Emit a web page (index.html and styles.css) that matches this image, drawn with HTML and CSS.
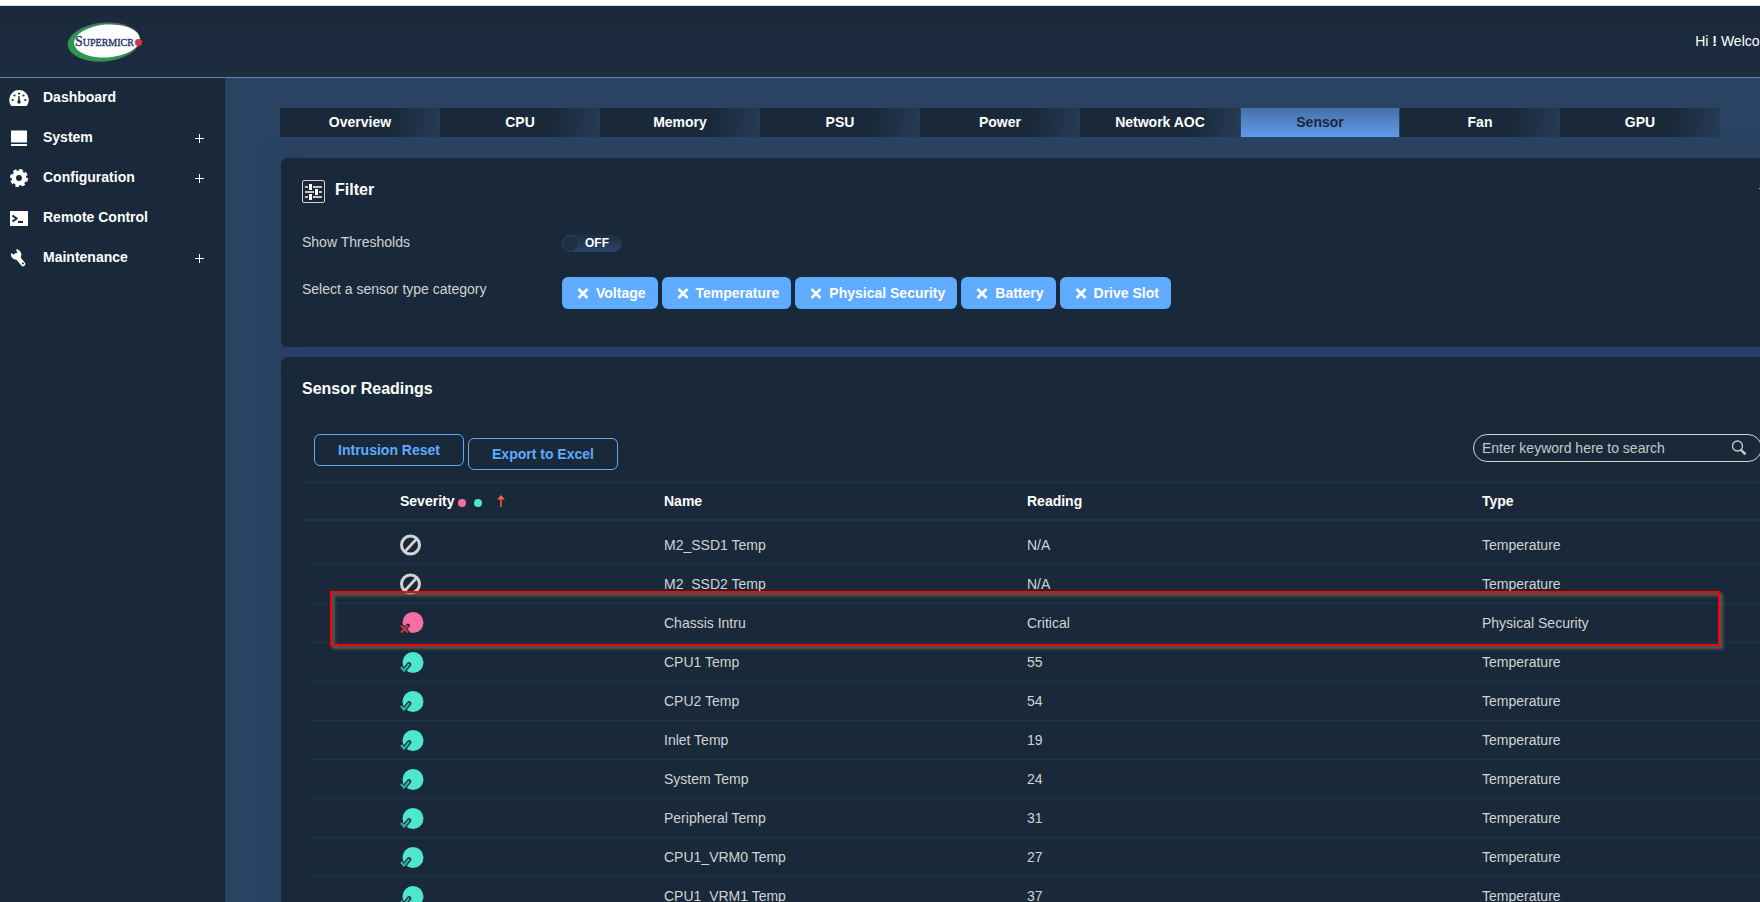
FILE: index.html
```html
<!DOCTYPE html>
<html lang="en">
<head>
  <meta charset="utf-8">
  <title>Supermicro BMC - Sensor</title>
  <link rel="stylesheet" href="styles.css">
</head>

<body>

<svg width="0" height="0" class="sprite" aria-hidden="true">
  <symbol id="na" viewBox="0 0 24 22">
    <circle cx="10.5" cy="11" r="9" fill="none" stroke="#d3d3d3" stroke-width="3"/>
    <path d="M5 17.5L16.5 5" stroke="#d3d3d3" stroke-width="2.6"/>
  </symbol>
  <symbol id="critical" viewBox="0 0 24 22">
    <circle cx="13" cy="10.500" r="10.500" fill="#f56fa3"/>
    <path d="M1.500 13.500L8 20.500M8 13.500L1.500 20.500" stroke="#192939" stroke-width="4" stroke-linecap="round"/>
    <path d="M1 13.500L8 20.500M8 13.500L1 20.500" stroke="#c4393a" stroke-width="2.200"/>
  </symbol>
  <symbol id="ok" viewBox="0 0 24 22">
    <circle cx="13" cy="11.500" r="10.500" fill="#4ce7ce"/>
    <path d="M1 16.500L4 19.500L9 13.500" fill="none" stroke="#192939" stroke-width="4.500" stroke-linecap="round"/>
    <path d="M1 16L4 19.500L9.300 13" fill="none" stroke="#36ac9b" stroke-width="2.200"/>
  </symbol>
  <symbol id="cross" viewBox="0 0 12 12">
    <path d="M1.500 2L10.500 11M10.500 2L1.500 11" stroke="#fff" stroke-width="2.600"/>
  </symbol>
</svg>

<div class="page">

  <header class="topbar">
    <a href="#" class="logo" aria-label="Supermicro">
      <svg width="80" height="42" viewBox="0 0 80 42">
        <ellipse cx="38" cy="21" rx="36.500" ry="19.500" transform="rotate(-5 38 21)" fill="#8b9aa2" opacity=".5"/>
        <ellipse cx="37" cy="21.500" rx="35" ry="18.500" transform="rotate(-5 37 21.500)" fill="#2a9a4a"/>
        <ellipse cx="41" cy="20" rx="33" ry="16.500" transform="rotate(-4 41 20)" fill="#fff"/>
        <text x="9" y="25" class="logo-text"><tspan class="logo-cap">S</tspan>UPERMICR</text>
        <circle cx="72.500" cy="21.500" r="3.600" fill="#d9343a"/>
      </svg>
    </a>
    <span class="welcome">Hi <b>!</b> Welcome</span>
  </header>

  <div class="body">

    <nav class="sidebar">
      <a href="#">
        <svg width="20" height="20" viewBox="0 0 20 20"><path d="M2 17.500A9.800 9.800 0 1 1 18 17.500Q17.700 18 17 18H3Q2.300 18 2 17.500z" fill="#fff"/><g fill="#192939"><circle cx="3.700" cy="12" r="1.100"/><circle cx="5.500" cy="7.500" r="1.100"/><circle cx="10" cy="5.500" r="1.100"/><circle cx="14.500" cy="7.500" r="1.100"/><circle cx="16.300" cy="12" r="1.100"/><path d="M9.400 8h1.200l.3 4.500a1.700 1.700 0 1 1-1.800 0z"/></g></svg>
        <span>Dashboard</span>
      </a>
      <a href="#">
        <svg width="20" height="20" viewBox="0 0 20 20"><path d="M2.500 2.500h15q.5 0 .5.500v11.500H2V3q0-.5.500-.5zM2 16h16v2H2z" fill="#fff"/></svg>
        <span>System</span><i class="plus"></i>
      </a>
      <a href="#">
        <svg width="20" height="20" viewBox="0 0 20 20"><circle cx="10" cy="10" r="5.200" fill="none" stroke="#fff" stroke-width="4.500"/><circle cx="10" cy="10" r="7.600" fill="none" stroke="#fff" stroke-width="3" stroke-dasharray="3.400 2.569"/></svg>
        <span>Configuration</span><i class="plus"></i>
      </a>
      <a href="#">
        <svg width="20" height="20" viewBox="0 0 20 20"><path d="M1 3h18v15H1z" fill="#fff"/><path d="M3.500 7.500L7.500 10.500L3.500 13.500M9 14h5" fill="none" stroke="#192939" stroke-width="2"/></svg>
        <span>Remote Control</span>
      </a>
      <a href="#">
        <svg width="20" height="20" viewBox="0 0 20 20"><path d="M7 7.500L14 16" stroke="#fff" stroke-width="4.600" stroke-linecap="round"/><path d="M7 1.300A5.200 5.200 0 1 1 2.200 5L5.500 7.300L8.200 4.800z" fill="#fff"/><circle cx="14" cy="15.500" r="1" fill="#192939"/></svg>
        <span>Maintenance</span><i class="plus"></i>
      </a>
    </nav>

    <main class="content">

      <nav class="tabs">
        <a href="#">Overview</a>
        <a href="#">CPU</a>
        <a href="#">Memory</a>
        <a href="#">PSU</a>
        <a href="#">Power</a>
        <a href="#">Network AOC</a>
        <a href="#" class="active">Sensor</a>
        <a href="#">Fan</a>
        <a href="#">GPU</a>
      </nav>

      <section class="panel filter">
        <h2>
          <svg width="23" height="23" viewBox="0 0 23 23"><rect x=".5" y=".5" width="22" height="22" rx="1.500" fill="none" stroke="#d3d3d3"/><path d="M3 7h3M11 7h9M3 12h9M17 12h3M3 17h3M11 17h9" stroke="#c8c8c8" stroke-width="2"/><path d="M8.500 4v6M14.500 9v6M8.500 14v6" stroke="#fff" stroke-width="3"/></svg>
          <span>Filter</span>
          <svg class="chevron" width="10" height="6" viewBox="0 0 10 6"><path d="M0 0h10L5 6z" fill="#fff"/></svg>
        </h2>
        <div class="field">
          <label for="thresholds">Show Thresholds</label>
          <label class="switch"><input type="checkbox" id="thresholds"><span>OFF</span></label>
        </div>
        <div class="field category">
          <span>Select a sensor type category</span>
          <div class="chips">
            <button type="button"><svg width="12" height="12"><use href="#cross"/></svg>Voltage</button>
            <button type="button"><svg width="12" height="12"><use href="#cross"/></svg>Temperature</button>
            <button type="button"><svg width="12" height="12"><use href="#cross"/></svg>Physical Security</button>
            <button type="button"><svg width="12" height="12"><use href="#cross"/></svg>Battery</button>
            <button type="button"><svg width="12" height="12"><use href="#cross"/></svg>Drive Slot</button>
          </div>
        </div>
      </section>

      <section class="panel readings">
        <h2>Sensor Readings</h2>

        <div class="toolbar">
          <button type="button" class="outline">Intrusion Reset</button>
          <button type="button" class="outline export">Export to Excel</button>
          <div class="search">
            <input type="text" aria-label="Search sensors" placeholder="Enter keyword here to search">
            <button type="button" aria-label="Search"><svg width="16" height="16" viewBox="0 0 16 16"><circle cx="6.500" cy="6" r="5" fill="none" stroke="#c8c8c8" stroke-width="1.300"/><path d="M10 9.800L14.500 14.300" stroke="#c8c8c8" stroke-width="2.400"/></svg></button>
          </div>
        </div>

        <div class="table-wrap">
          <table>
            <colgroup>
              <col class="c-severity">
              <col class="c-name">
              <col class="c-reading">
              <col>
            </colgroup>
            <thead>
              <tr>
                <th>
                  <div class="sev-head">Severity
                    <i class="dot pink"></i><i class="dot teal"></i>
                    <svg width="8" height="12" viewBox="0 0 8 12"><path d="M4 12V2" stroke="#f4604e" stroke-width="1.500"/><path d="M0 4.500L4 0L8 4.500z" fill="#f4604e"/></svg>
                  </div>
                </th>
                <th>Name</th>
                <th>Reading</th>
                <th>Type</th>
              </tr>
            </thead>
            <tbody>
              <tr><td><svg class="sev"><use href="#na"/></svg></td><td>M2_SSD1 Temp</td><td>N/A</td><td>Temperature</td></tr>
              <tr><td><svg class="sev"><use href="#na"/></svg></td><td>M2_SSD2 Temp</td><td>N/A</td><td>Temperature</td></tr>
              <tr><td><svg class="sev"><use href="#critical"/></svg></td><td>Chassis Intru</td><td>Critical</td><td>Physical Security</td></tr>
              <tr><td><svg class="sev"><use href="#ok"/></svg></td><td>CPU1 Temp</td><td>55</td><td>Temperature</td></tr>
              <tr><td><svg class="sev"><use href="#ok"/></svg></td><td>CPU2 Temp</td><td>54</td><td>Temperature</td></tr>
              <tr><td><svg class="sev"><use href="#ok"/></svg></td><td>Inlet Temp</td><td>19</td><td>Temperature</td></tr>
              <tr><td><svg class="sev"><use href="#ok"/></svg></td><td>System Temp</td><td>24</td><td>Temperature</td></tr>
              <tr><td><svg class="sev"><use href="#ok"/></svg></td><td>Peripheral Temp</td><td>31</td><td>Temperature</td></tr>
              <tr><td><svg class="sev"><use href="#ok"/></svg></td><td>CPU1_VRM0 Temp</td><td>27</td><td>Temperature</td></tr>
              <tr><td><svg class="sev"><use href="#ok"/></svg></td><td>CPU1_VRM1 Temp</td><td>37</td><td>Temperature</td></tr>
            </tbody>
          </table>
          <div class="marker"></div>
        </div>
      </section>

    </main>
  </div>
</div>

</body>
</html>
```
FILE: styles.css
```css
* {
  box-sizing: border-box;
}
body {
  margin: 0;
  height: 100vh;
  overflow: hidden;
  font-family: 'Liberation Sans', Arial, sans-serif;
  font-size: 14px;
  line-height: 16px;
  background-color: #fff;
  color: #d3d3d3;
}
a {
  color: #fff;
  text-decoration: none;
}
button, input {
  font: inherit;
  margin: 0;
}
svg {
  display: block;
  flex: none;
}
.sprite {
  position: absolute;
}

/* the console is a bit wider than the window */
.page {
  display: flex;
  flex-direction: column;
  width: calc(100% + 40px);
  min-height: 100vh;
  padding-top: 5px;
}

.topbar {
  display: flex;
  align-items: center;
  justify-content: space-between;
  height: 73px;
  padding: 0 21px 0 66px;
  border-top: 1px solid #d5e3e3;
  border-bottom: 1px solid #5f83b4;
  background: linear-gradient(#19293a, #1e2c40);
}
.logo-text {
  font: 10px 'Liberation Serif', 'Times New Roman', serif;
  fill: #2b3a70;
  stroke: #2b3a70;
  stroke-width: .4px;
}
.logo-cap {
  font-size: 14px;
}
.welcome {
  padding-bottom: 2px;
  color: #fff;
}

.body {
  display: flex;
  flex: 1;
}
.sidebar {
  flex: none;
  width: 225px;
  background: #192939;
}
.sidebar a {
  display: flex;
  align-items: center;
  gap: 14px;
  height: 40px;
  padding: 0 21px 0 9px;
  font-weight: bold;
}
.sidebar span {
  padding-bottom: 2px;
}
.plus {
  width: 9px;
  height: 9px;
  margin-left: auto;
  background:
    linear-gradient(#fff, #fff) 4px 0 / 1px 9px no-repeat,
    linear-gradient(#fff, #fff) 0 4px / 9px 1px no-repeat;
}

.content {
  flex: 1;
  min-width: 0;
  padding: 30px 10px 0 55px;
  background: #2a4362;
}

.tabs {
  display: grid;
  grid-template-columns: repeat(9, 1fr);
  margin-right: 70px;
}
.tabs a {
  line-height: 29px;
  font-weight: bold;
  text-align: center;
  background: linear-gradient(100deg, #19293a 70%, #263c56);
}
.tabs a.active {
  margin: 0 1px;
  color: #19293a;
  background: linear-gradient(#476fa5, #5f9cee);
}

.panel {
  margin-left: 1px;
  border-radius: 6px;
  background: #192939;
  box-shadow: 0 0 20px rgba(40, 60, 110, .5);
}
.panel h2 {
  display: flex;
  align-items: center;
  margin: 0;
  font-size: 16px;
  line-height: 22px;
  color: #fff;
}

.filter {
  margin-top: 21px;
  height: 189px;
  padding: 21px 21px 0;
}
.filter h2 {
  gap: 10px;
}
.filter h2 span {
  padding-bottom: 2px;
}
.chevron {
  margin-left: auto;
}
.field {
  display: grid;
  grid-template-columns: 260px 1fr;
  align-items: start;
  margin-top: 31px;
}
.category {
  margin-top: 25px;
}
.category > span {
  padding-top: 4px;
}
.switch {
  display: flex;
  align-items: center;
  gap: 6px;
  width: 60px;
  height: 18px;
  border-radius: 9px;
  background: linear-gradient(#1b2c40, #2b4467);
  font-size: 12px;
  font-weight: bold;
  color: #fff;
}
.switch input {
  appearance: none;
  width: 17px;
  height: 17px;
  border: 1px solid #2c4260;
  border-radius: 50%;
  background: #1c2f47;
}
.chips {
  display: flex;
  gap: 4px;
}
.chips button {
  display: flex;
  align-items: center;
  gap: 7px;
  height: 32px;
  padding: 0 12px 0 15px;
  border: 0;
  border-radius: 6px;
  font-weight: bold;
  color: #fff;
  background: #5eabff;
}

.readings {
  margin-top: 10px;
  padding: 21px 20px 0 21px;
}
.toolbar {
  display: flex;
  align-items: flex-start;
  gap: 4px;
  margin-top: 34px;
  padding: 0 8px 12px 12px;
}
.outline {
  width: 150px;
  height: 32px;
  border: 1px solid #5eabff;
  border-radius: 6px;
  font-weight: bold;
  color: #5eabff;
  background: none;
}
.export {
  margin-top: 4px;
}
.search {
  display: flex;
  align-items: center;
  width: 289px;
  height: 28px;
  margin-left: auto;
  padding: 0 14px 0 8px;
  border: 1px solid #d3d3d3;
  border-radius: 14px;
}
.search input {
  flex: 1;
  min-width: 0;
  padding: 0;
  border: 0;
  outline: 0;
  color: #d3d3d3;
  background: none;
}
.search input::placeholder {
  color: #c8c8c8;
}
.search button {
  padding: 0;
  border: 0;
  background: none;
}

.table-wrap {
  position: relative;
}
table {
  width: 100%;
  table-layout: fixed;
  border-spacing: 0;
}
.c-severity {
  width: 362px;
}
.c-name {
  width: 363px;
}
.c-reading {
  width: 455px;
}
th, td {
  padding: 0;
  text-align: left;
}
th {
  height: 39px;
  border-top: 1px solid #20344e;
  border-bottom: 2px solid #20344e;
  color: #fff;
}
td {
  height: 39px;
  border-bottom: 1px solid #20344e;
}
th:first-child, td:first-child {
  padding-left: 98px;
}
/* row lines start 10px to the right of the header lines */
td:first-child {
  border-bottom-color: transparent;
  background: linear-gradient(#20344e, #20344e) 10px 100% / 100% 1px no-repeat border-box;
}
tbody tr:first-child td {
  height: 44px;
  padding-top: 5px;
}
.sev-head {
  display: flex;
  align-items: center;
}
.sev-head svg {
  margin-left: 11px;
}
.dot {
  width: 8px;
  height: 8px;
  margin: 3px 4px 0;
  border-radius: 50%;
}
.pink {
  background: #f56fa3;
}
.teal {
  background: #4ce7ce;
}
.sev {
  width: 24px;
  height: 22px;
}

.marker {
  position: absolute;
  top: 109px;
  left: 28px;
  right: 50px;
  height: 55px;
  border: 2px solid #f00;
  filter: drop-shadow(2px 2px 1px rgba(110, 105, 100, .6)) drop-shadow(2px 2px 1px rgba(110, 105, 100, .6));
  pointer-events: none;
}
```
